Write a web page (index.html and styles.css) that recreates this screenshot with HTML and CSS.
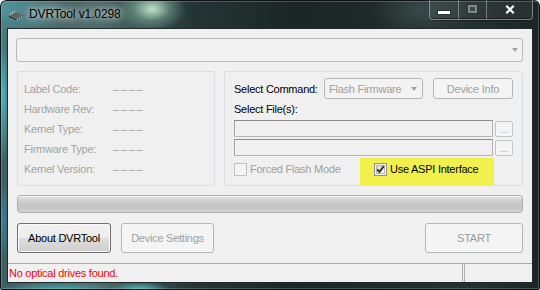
FILE: index.html
```html
<!DOCTYPE html>
<html>
<head>
<meta charset="utf-8">
<link rel="stylesheet" href="styles.css">
</head>
<body>
<div class="window">
  <div class="titlebar">
    <svg class="app-icon" width="16" height="12" viewBox="0 0 16 12">
      <polygon points="1,6.5 8,9.5 8,11 1,8" fill="#2b2b2b"/>
      <polygon points="8,9.5 15,5.5 15,7 8,11" fill="#444"/>
      <polygon points="1,6.5 8,2.5 15,5.5 8,9.5" fill="#7c7c7c"/>
      <polygon points="2.5,6.5 8,3.6 13.5,5.6 8,8.4" fill="#5e5e5e"/>
      <g stroke="#e8e8e8" stroke-width="1">
        <line x1="2" y1="5.2" x2="3" y2="4.6"/>
        <line x1="4" y1="4.1" x2="5" y2="3.5"/>
        <line x1="6" y1="3" x2="7" y2="2.4"/>
        <line x1="9" y1="10.6" x2="10" y2="10"/>
        <line x1="11" y1="9.4" x2="12" y2="8.8"/>
        <line x1="13" y1="8.2" x2="14" y2="7.6"/>
      </g>
    </svg>
    <span class="title">DVRTool v1.0298</span>
    <div class="caption-buttons">
      <div class="cb cb-min"><span class="min-glyph"></span></div>
      <div class="cb cb-max"><span class="max-glyph"></span></div>
      <div class="cb cb-close">
        <svg width="10" height="9" viewBox="0 0 10 9">
          <path d="M1 0.5 L9 8.5 M9 0.5 L1 8.5" stroke="#2a3434" stroke-width="3.4"/>
          <path d="M1.3 0.8 L8.7 8.2 M8.7 0.8 L1.3 8.2" stroke="#ffffff" stroke-width="2.2"/>
        </svg>
      </div>
    </div>
  </div>
  <div class="client">
    <div class="content">
      <div class="drive-combo"><span class="arrow"></span></div>
      <div class="groups">
        <div class="group info-group">
          <div class="info-row"><span class="info-label">Label Code:</span><span class="info-value">––––</span></div>
          <div class="info-row"><span class="info-label">Hardware Rev:</span><span class="info-value">––––</span></div>
          <div class="info-row"><span class="info-label">Kernel Type:</span><span class="info-value">––––</span></div>
          <div class="info-row"><span class="info-label">Firmware Type:</span><span class="info-value">––––</span></div>
          <div class="info-row"><span class="info-label">Kernel Version:</span><span class="info-value">––––</span></div>
        </div>
        <div class="group cmd-group">
          <div class="cmd-row">
            <span class="cmd-label">Select Command:</span>
            <div class="cmd-combo"><span class="cmd-combo-text">Flash Firmware</span><span class="arrow"></span></div>
            <div class="btn btn-disabled btn-info">Device Info</div>
          </div>
          <div class="files-label">Select File(s):</div>
          <div class="file-row">
            <div class="textbox"></div>
            <div class="browse">...</div>
          </div>
          <div class="file-row file-row-2">
            <div class="textbox"></div>
            <div class="browse">...</div>
          </div>
          <div class="check-row">
            <label class="check check-disabled">
              <span class="box box-disabled"></span>
              <span>Forced Flash Mode</span>
            </label>
            <div class="highlight">
              <label class="check">
                <svg class="box-svg" width="13" height="13" viewBox="0 0 13 13">
                  <defs>
                    <linearGradient id="cbg" x1="0" y1="0" x2="1" y2="1">
                      <stop offset="0" stop-color="#d6d6d6"/>
                      <stop offset="1" stop-color="#fafafa"/>
                    </linearGradient>
                  </defs>
                  <rect x="0.5" y="0.5" width="12" height="12" fill="#f4f4f4" stroke="#8e8f8f"/>
                  <rect x="2.5" y="2.5" width="8" height="8" fill="url(#cbg)" stroke="#b8b8b8"/>
                  <path d="M3.2 6.4 L5.4 9 L9.8 3.2" fill="none" stroke="#2b3a1c" stroke-width="2"/>
                </svg>
                <span>Use ASPI Interface</span>
              </label>
            </div>
          </div>
        </div>
      </div>
      <div class="progress"></div>
      <div class="button-row">
        <div class="btn btn-normal btn-about">About DVRTool</div>
        <div class="btn btn-disabled btn-settings">Device Settings</div>
        <div class="btn btn-disabled btn-start">START</div>
      </div>
    </div>
    <div class="statusbar">
      <div class="panel panel-main">No optical drives found.</div>
      <div class="panel panel-side"></div>
    </div>
  </div>
</div>
</body>
</html>
```
FILE: styles.css
```css
html, body {
  margin: 0;
  padding: 0;
  background: #ffffff;
}

body {
  font-family: "Liberation Sans", Arial, sans-serif;
  font-size: 11px;
  letter-spacing: -0.25px;
  color: #000;
}

.window {
  width: 540px;
  height: 290px;
  box-sizing: border-box;
  display: flex;
  flex-direction: column;
  border-radius: 6px 6px 2px 2px;
  overflow: hidden;
  box-shadow: inset 0 0 0 1px #0e1414, inset 0 0 0 2px rgba(200, 220, 220, 0.25);
  background:
    radial-gradient(ellipse 34px 22px at 152px 9px, rgba(200, 235, 205, 0.95), rgba(130, 180, 160, 0.45) 55%, rgba(80, 120, 110, 0) 100%),
    radial-gradient(ellipse 70px 40px at 0px 8px, rgba(90, 170, 180, 0.75), rgba(90, 170, 180, 0) 100%),
    radial-gradient(ellipse 10px 70px at 2px 95px, rgba(80, 200, 210, 0.85), rgba(80, 200, 210, 0) 100%),
    radial-gradient(ellipse 10px 40px at 2px 220px, rgba(60, 150, 190, 0.6), rgba(60, 150, 190, 0) 100%),
    radial-gradient(ellipse 60px 8px at 60px 290px, rgba(60, 190, 200, 0.8), rgba(60, 190, 200, 0) 100%),
    radial-gradient(ellipse 30px 8px at 140px 290px, rgba(90, 220, 230, 0.8), rgba(90, 220, 230, 0) 100%),
    radial-gradient(ellipse 50px 30px at 420px 10px, rgba(80, 100, 100, 0.5), rgba(80, 100, 100, 0) 100%),
    linear-gradient(90deg, #3d5f62 0%, #4a6668 8%, #506b6b 18%, #3a5555 26%, #243434 36%, #1b2626 55%, #202b2b 75%, #263232 85%, #1c2525 100%);
}

/* ---------- title bar ---------- */
.titlebar {
  height: 28px;
  flex: none;
  display: flex;
  align-items: flex-start;
  padding: 0 7px 0 8px;
}

.app-icon {
  margin-top: 9px;
  flex: none;
}

.title {
  margin-left: 5px;
  margin-top: 6px;
  font-size: 12px;
  line-height: 16px;
  letter-spacing: -0.1px;
  color: #000;
  text-shadow: 0 0 6px rgba(255, 255, 255, 0.9), 0 0 10px rgba(255, 255, 255, 0.7);
}

.caption-buttons {
  margin-left: auto;
  width: 104px;
  height: 20px;
  box-sizing: border-box;
  display: flex;
  border: 1px solid rgba(175, 190, 190, 0.6);
  border-top: none;
  border-radius: 0 0 4px 4px;
  box-shadow: inset 0 -1px 0 rgba(0, 0, 0, 0.5), 0 1px 0 rgba(0, 0, 0, 0.4);
  background: rgba(255, 255, 255, 0.05);
}

.cb {
  display: flex;
  align-items: center;
  justify-content: center;
}

.cb-min {
  width: 28px;
}

.cb-max {
  width: 27px;
  border-left: 1px solid rgba(175, 190, 190, 0.5);
}

.cb-close {
  flex: 1;
  border-left: 1px solid rgba(175, 190, 190, 0.5);
  padding-bottom: 1px;
}

.min-glyph {
  width: 12px;
  height: 3px;
  margin-top: 5px;
  background: #ffffff;
  box-shadow: 0 0 0 1px #2a3434;
}

.max-glyph {
  width: 5px;
  height: 4px;
  border: 2px solid #7d8a8a;
  background: #3d4a4a;
  box-shadow: 0 0 0 1px #2a3434;
  margin-top: -1px;
}

/* ---------- client ---------- */
.client {
  flex: 1;
  margin: 0 7px 7px 7px;
  border: 1px solid #1f2a2a;
  background: #f0f0f0;
  display: flex;
  flex-direction: column;
}

.content {
  flex: 1;
  padding: 9px 9px 0 9px;
}

.drive-combo {
  height: 24px;
  margin-left: -1px;
  box-sizing: border-box;
  border: 1px solid #b9b9b9;
  border-radius: 3px;
  background: #f2f2f2;
  display: flex;
  align-items: center;
  justify-content: flex-end;
  padding-right: 4px;
}

.arrow {
  width: 0;
  height: 0;
  border-left: 3.5px solid transparent;
  border-right: 3.5px solid transparent;
  border-top: 4px solid #a2a2a2;
}

.groups {
  margin-top: 9px;
  display: flex;
  gap: 9px;
}

.group {
  height: 115px;
  box-sizing: border-box;
  border: 1px solid #d5dfe5;
  border-radius: 3px;
}

.info-group {
  width: 198px;
  padding: 7px 0 0 6px;
  color: #a3a3a3;
}

.info-row {
  display: flex;
  height: 20px;
  line-height: 20px;
}

.info-label {
  width: 89px;
}

.info-value {
  letter-spacing: 1.7px;
}

.cmd-group {
  width: 299px;
  padding: 6px 9px 0 9px;
}

.cmd-row {
  display: flex;
  height: 21px;
  align-items: center;
}

.cmd-label {
  width: 90px;
}

.cmd-combo {
  width: 99px;
  height: 21px;
  box-sizing: border-box;
  border: 1px solid #b4b8ba;
  border-radius: 3px;
  background: #f3f3f3;
  color: #a0a0a0;
  display: flex;
  align-items: center;
  padding: 0 5px 0 4px;
}

.cmd-combo-text {
  flex: 1;
}

.btn {
  box-sizing: border-box;
  border-radius: 3px;
  display: flex;
  align-items: center;
  justify-content: center;
}

.btn-disabled {
  border: 1px solid #b3b7ba;
  background: #f4f4f4;
  color: #a0a0a0;
}

.btn-normal {
  border: 1px solid #707070;
  background: linear-gradient(#f2f2f2 0%, #ebebeb 49%, #dddddd 50%, #cfcfcf 100%);
  box-shadow: inset 0 0 0 1px #fbfbfb;
  color: #000;
}

.btn-info {
  margin-left: 10px;
  width: 80px;
  height: 21px;
}

.files-label {
  height: 20px;
  line-height: 20px;
  margin-bottom: 1px;
}

.file-row {
  display: flex;
  height: 17px;
  gap: 2px;
}

.file-row-2 {
  margin-top: 2px;
}

.textbox {
  flex: 1;
  box-sizing: border-box;
  border: 1px solid #b5b5b5;
  border-top-color: #8c8c8c;
  border-left-color: #a4a4a4;
  background: #f0f0f0;
}

.browse {
  width: 18px;
  height: 16px;
  margin-top: 1px;
  box-sizing: border-box;
  border: 1px solid #c3c6c8;
  border-radius: 2px;
  background: #f4f4f4;
  color: #a8a8a8;
  font-size: 9px;
  letter-spacing: 0;
  line-height: 17px;
  text-align: center;
}

.check-row {
  display: flex;
  height: 28px;
  margin-top: 2px;
  align-items: flex-start;
}

.check {
  display: flex;
  align-items: center;
  gap: 3px;
  height: 13px;
  line-height: 13px;
}

.check-disabled {
  width: 126px;
  margin-top: 5px;
  color: #a0a0a0;
}

.box {
  width: 13px;
  height: 13px;
  box-sizing: border-box;
  flex: none;
}

.box-disabled {
  border: 1px solid #c2c2c2;
  background: #f4f4f4;
}

.box-svg {
  flex: none;
}

.highlight {
  width: 134px;
  height: 28px;
  box-sizing: border-box;
  padding: 5px 0 0 14px;
  background: #f2f04c;
}

.progress {
  margin-top: 9px;
  height: 18px;
  box-sizing: border-box;
  border: 1px solid #b0b0b0;
  border-radius: 3px;
  background: linear-gradient(#e8e8e8 0%, #d6d6d6 20%, #c8c8c8 45%, #c6c6c6 75%, #d2d2d2 100%);
  box-shadow: inset 0 1px 0 #f4f4f4;
}

.button-row {
  margin-top: 10px;
  height: 30px;
  display: flex;
}

.btn-about {
  width: 94px;
}

.btn-settings {
  width: 93px;
  margin-left: 10px;
}

.btn-start {
  width: 98px;
  margin-left: auto;
  color: #9a9a9a;
}

/* ---------- status bar ---------- */
.statusbar {
  height: 19px;
  box-sizing: border-box;
  border-top: 1px solid #a8a8a8;
  display: flex;
  flex: none;
}

.panel-main {
  width: 453px;
  border-right: 1px solid #b0b0b0;
  padding-left: 1px;
  line-height: 18px;
  color: #ff0000;
}

.panel-side {
  flex: 1;
  margin-left: 1px;
  border-left: 1px solid #b0b0b0;
}
```
